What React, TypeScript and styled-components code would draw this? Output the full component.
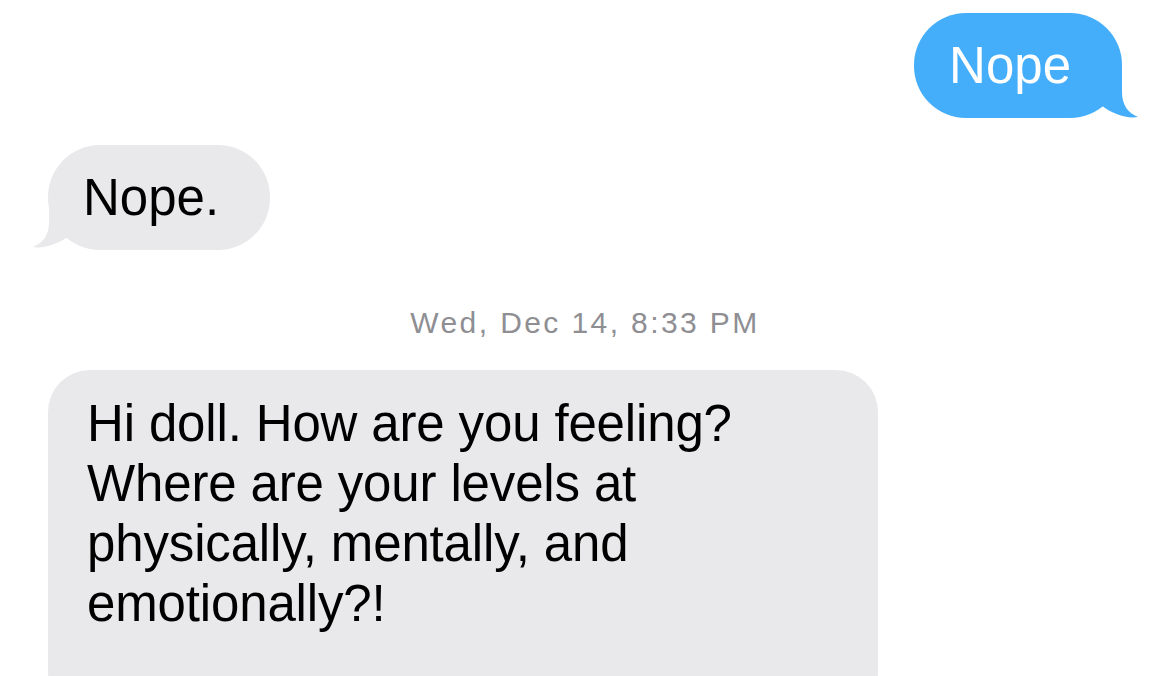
import React from "react";
import styled, { createGlobalStyle } from "styled-components";

const SENT_BLUE = "#45aefb";
const RECEIVED_GRAY = "#e9e9eb";

const GlobalStyle = createGlobalStyle`
  html, body {
    margin: 0;
    padding: 0;
    height: 676px;
    overflow: hidden;
    background: #ffffff;
  }
  body {
    font-family: "Liberation Sans", Arial, sans-serif;
    -webkit-font-smoothing: antialiased;
  }
`;

const Thread = styled.div`
  display: flex;
  flex-direction: column;
  width: 1170px;
  padding-top: 13px;
`;

const Row = styled.div<{ $sent?: boolean; $gap?: number }>`
  display: flex;
  justify-content: ${(p) => (p.$sent ? "flex-end" : "flex-start")};
  padding: 0 48px;
  margin-top: ${(p) => p.$gap ?? 0}px;
`;

const Bubble = styled.div<{ $sent?: boolean }>`
  position: relative;
  height: 105px;
  line-height: 105px;
  padding: 0 51px 0 35px;
  border-radius: 52px;
  font-size: 51px;
  color: ${(p) => (p.$sent ? "#ffffff" : "#000000")};
  background: ${(p) => (p.$sent ? SENT_BLUE : RECEIVED_GRAY)};
  white-space: nowrap;
`;

const LongBubble = styled.div`
  width: 791px;
  padding: 24px 0 80px 39px;
  border-radius: 42px;
  font-size: 51px;
  line-height: 60px;
  letter-spacing: -0.15px;
  color: #000000;
  background: ${RECEIVED_GRAY};
`;

const Timestamp = styled.div`
  margin-top: 53px;
  text-align: center;
  font-size: 30px;
  line-height: 40px;
  letter-spacing: 2.4px;
  color: #8e8e93;
`;

const TailSvg = styled.svg<{ $sent?: boolean }>`
  position: absolute;
  width: 50px;
  height: 50px;
  ${(p) =>
    p.$sent
      ? "right: -16px; bottom: 0;"
      : "left: -15px; bottom: 2px; transform: scaleX(-1);"}
`;

function Tail({ sent }: { sent?: boolean }) {
  return (
    <TailSvg $sent={sent} viewBox="0 0 50 50">
      <path
        d="M0 0 H34 V24 C34 37 40 45 50 49 C39 51 24 46 13 37 L0 30 Z"
        fill={sent ? SENT_BLUE : RECEIVED_GRAY}
      />
    </TailSvg>
  );
}

export default function App() {
  return (
    <>
      <GlobalStyle />
      <Thread>
        <Row $sent>
          <Bubble $sent>
            Nope
            <Tail sent />
          </Bubble>
        </Row>
        <Row $gap={27}>
          <Bubble>
            Nope.
            <Tail />
          </Bubble>
        </Row>
        <Timestamp>Wed, Dec 14, 8:33 PM</Timestamp>
        <Row $gap={27}>
          <LongBubble>
            Hi doll. How are you feeling?
            <br />
            Where are your levels at
            <br />
            physically, mentally, and
            <br />
            emotionally?!
          </LongBubble>
        </Row>
      </Thread>
    </>
  );
}
